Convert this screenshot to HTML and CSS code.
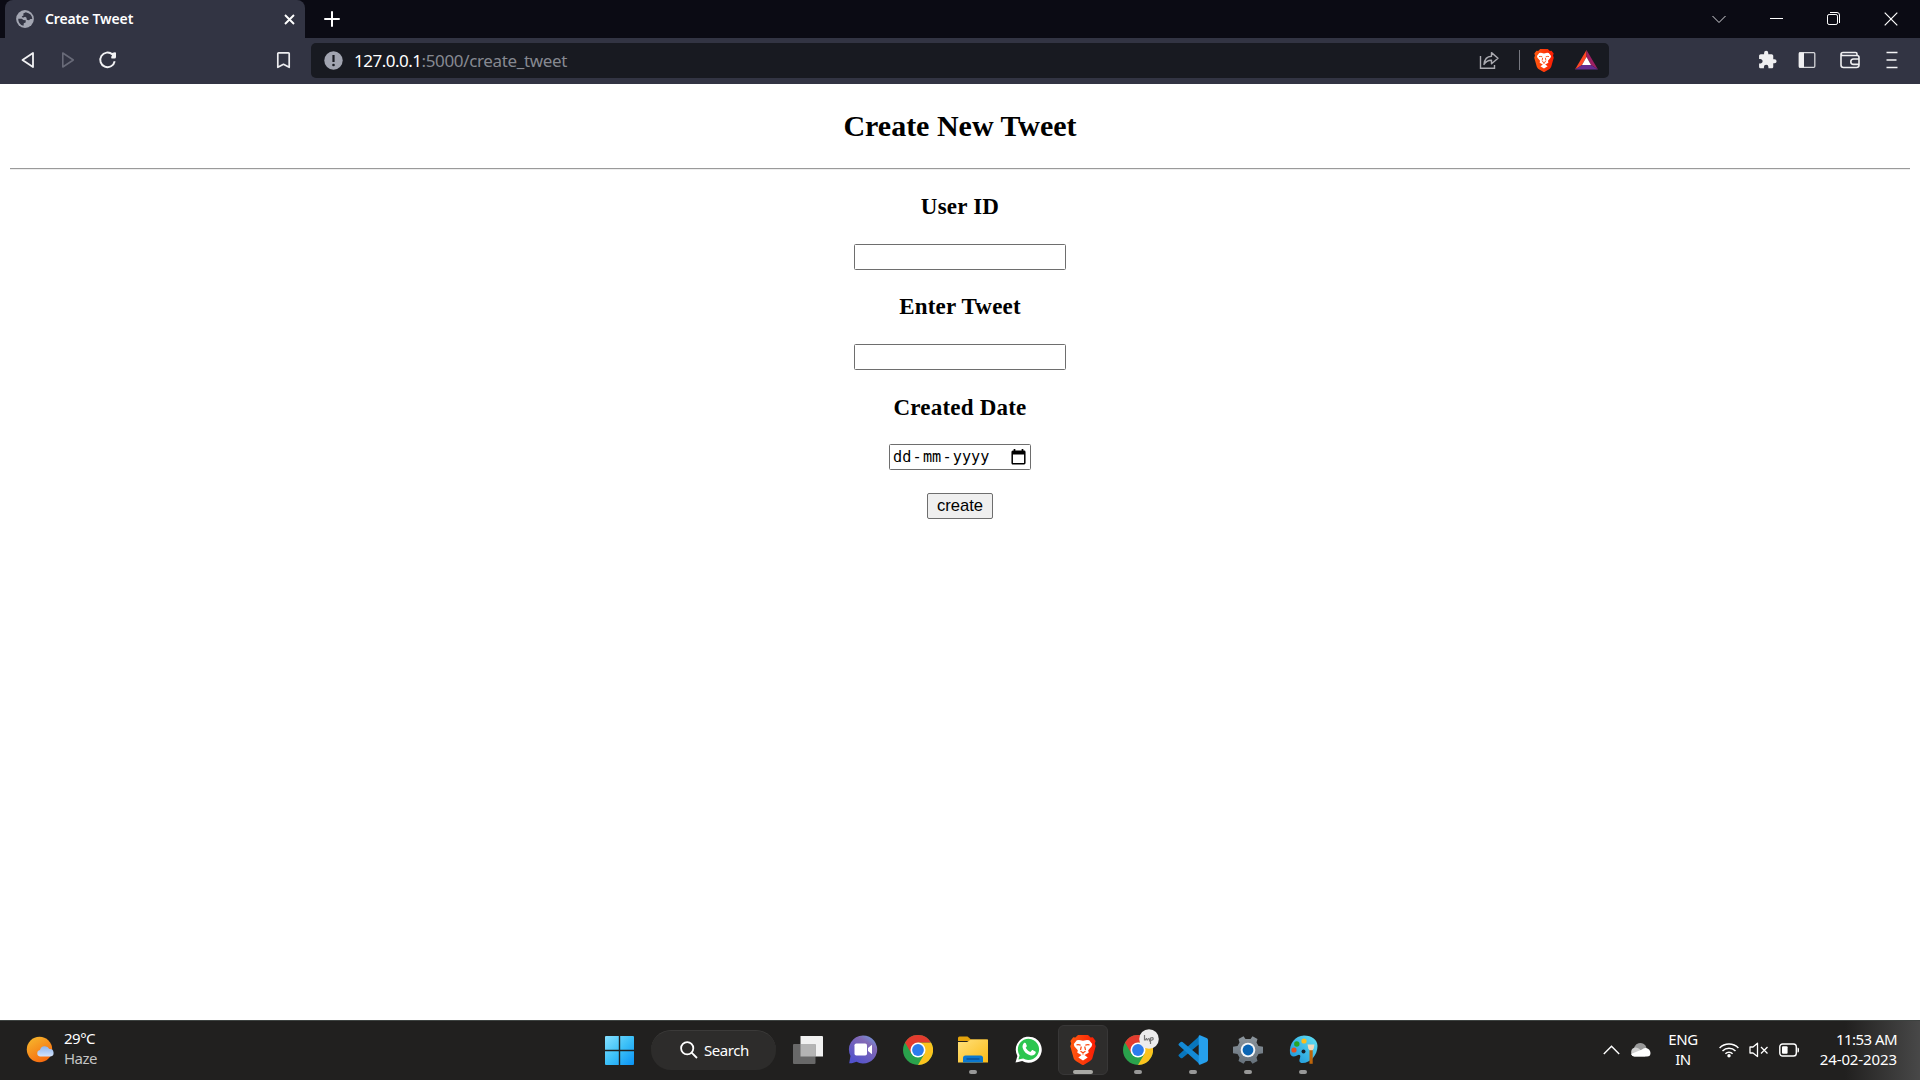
FILE: index.html
```html
<!DOCTYPE html>
<html lang="en">
<head>
<meta charset="utf-8">
<title>Create Tweet</title>
<link rel="stylesheet" href="styles.css">
</head>
<body>
<svg class="defs" width="0" height="0" aria-hidden="true">
  <defs>
    <linearGradient id="win" x1="0" y1="0" x2="1" y2="1"><stop offset="0" stop-color="#86e0ff"/><stop offset=".5" stop-color="#3cc0f8"/><stop offset="1" stop-color="#0a93f5"/></linearGradient>
    <linearGradient id="sun" x1="0.2" y1="0" x2="0.8" y2="1"><stop offset="0" stop-color="#f6b52c"/><stop offset="1" stop-color="#f7640c"/></linearGradient>
    <linearGradient id="cloud" x1="0" y1="0" x2="0" y2="1"><stop offset="0" stop-color="#8eb5ee"/><stop offset="1" stop-color="#d3e2fb"/></linearGradient>
    <linearGradient id="chat" x1="1" y1="0" x2="0.3" y2="1"><stop offset="0" stop-color="#6ca4e8"/><stop offset=".35" stop-color="#8269b5"/><stop offset="1" stop-color="#5252cc"/></linearGradient>
    <linearGradient id="folder" x1="0" y1="0" x2="1" y2="1"><stop offset="0" stop-color="#ffe07a"/><stop offset="1" stop-color="#fbbb17"/></linearGradient>
    <linearGradient id="brave" x1="0" y1="0" x2="1" y2="0"><stop offset="0" stop-color="#ff5a10"/><stop offset="1" stop-color="#fb1c04"/></linearGradient>
    <linearGradient id="gear" x1="0" y1="0" x2="0" y2="1"><stop offset="0" stop-color="#8c959c"/><stop offset="1" stop-color="#66717b"/></linearGradient>
    <linearGradient id="paint" x1="1" y1="0" x2="0" y2="1"><stop offset="0" stop-color="#62e3f5"/><stop offset="1" stop-color="#188fd8"/></linearGradient>
    <symbol id="chrome" viewBox="0 0 30 30">
      <circle cx="15" cy="15" r="15" fill="#2aa24c"/>
      <path d="M15 7.5h13A15 15 0 0 1 15 30l6.500-11.200z" fill="#fcc31e"/>
      <path d="M2 7.500A15 15 0 0 1 28 7.500H15L8.500 18.800z" fill="#e33b2e"/>
      <circle cx="15" cy="15" r="7.500" fill="#fff"/><circle cx="15" cy="15" r="5.900" fill="#2d7cec"/>
    </symbol>
    <symbol id="lion" viewBox="0 0 26 30">
      <path d="M8 0h10l2.600 2.600 2.200-.3L25.600 6l-.8 2.500.9 2.800-3.200 11.500c-.5 1.700-1.500 2.600-2.800 3.500L14 29.700q-1 .5-2 0l-5.700-3.400c-1.300-.9-2.300-1.800-2.800-3.500L.3 11.300l.9-2.800L.4 6l2.800-3.700 2.200.3z" fill="url(#brave)"/>
      <path d="M9 5l4 .8L17 5l2.200.3 3 3.700-.5 2.200-3.500 4 .5 2.600-4.200 2.300 3.200 2.400L13 25.400l-4.700-2.900 3.200-2.400-4.200-2.300.5-2.600-3.500-4L3.800 9l3-3.700z" fill="#fff"/>
      <path d="M6.500 9.800q2.500-.4 4.200.4M19.500 9.800q-2.500-.4-4.200.4M11.300 11.500l-.8 3.500M14.700 11.500l.8 3.500M10.500 16.200l2.500 1.500 2.500-1.500M13 17.700v1.800" fill="none" stroke="#fb4a10" stroke-width="1.200"/>
    </symbol>
  </defs>
</svg>

<header class="browser">
  <div class="tabstrip">
    <div class="tab">
      <svg width="18" height="18" viewBox="0 0 18 18"><circle cx="9" cy="9" r="8.900" fill="#a3a6b2"/><path d="M2.200 8.700h3.600l1.500 1.300 2.500.3-.2 2.200-1.800.7-.3 2.600q-5.300-1.300-5.300-7.100z" fill="#323443"/><path d="M9.800 2.200 7.300 3.500l.2 2-1.800 1 1.200 1.200 2.200-.9 1.400 1 .3 1.900 2.200.6 1.300-1.400 2 .1q-.3-5.500-6.500-6.800z" fill="#323443"/></svg>
      <span class="tab-title">Create Tweet</span>
      <svg class="tab-close" width="11" height="11" viewBox="0 0 11 11"><path d="M1 1l9 9M10 1l-9 9" stroke="#fff" stroke-width="1.900"/></svg>
    </div>
    <svg class="new-tab" width="16" height="16" viewBox="0 0 16 16"><path d="M8 1v14M1 8h14" stroke="#fff" stroke-width="2" stroke-linecap="round"/></svg>
    <div class="window-controls">
      <svg width="14" height="14" viewBox="0 0 14 14"><path d="M.5 4 7 10.500 13.500 4" fill="none" stroke="#d7d7da"/></svg>
      <svg width="14" height="14" viewBox="0 0 14 14"><path d="M0 6.500h13" stroke="#fff"/></svg>
      <svg width="14" height="14" viewBox="0 0 14 14" fill="none" stroke="#fff"><rect x=".5" y="2.500" width="10" height="10" rx="1.600"/><path d="M3 .5h7a2.500 2.500 0 0 1 2.500 2.500v8"/></svg>
      <svg width="14" height="14" viewBox="0 0 14 14"><path d="M.7.7l12.600 12.600M13.300.7.7 13.300" stroke="#fff" stroke-width="1.200"/></svg>
    </div>
  </div>

  <div class="toolbar">
    <div class="nav">
      <svg width="32" height="32" viewBox="0 0 32 32"><path d="M21 9v14L10.500 16z" fill="none" stroke="#f2f2f4" stroke-width="1.800" stroke-linejoin="round"/></svg>
      <svg width="32" height="32" viewBox="0 0 32 32"><path d="M10.800 9v14L21.300 16z" fill="none" stroke="#686a78" stroke-width="1.600" stroke-linejoin="round"/></svg>
      <svg width="32" height="32" viewBox="0 0 32 32"><path d="M22.700 17.300A7.300 7.300 0 1 1 20.500 10.500" fill="none" stroke="#f2f2f4" stroke-width="1.900"/><path d="M20 9q4-1.500 4 0v4q0 1.500-1.500 1.500h-3q-1-1.500.5-3z" fill="#f2f2f4"/></svg>
      <svg class="bookmark" width="32" height="32" viewBox="0 0 32 32"><path d="M10.800 9.600q0-.8.800-.8h9.800q.8 0 .8.800V23.300L16.500 20.300l-5.700 3z" fill="none" stroke="#ededf0" stroke-width="1.700" stroke-linejoin="round"/></svg>
    </div>
    <div class="address">
      <svg width="19" height="19" viewBox="0 0 19 19"><circle cx="9.500" cy="9.500" r="9.200" fill="#a1a4b0"/><path d="M9.500 4v7" stroke="#181a21" stroke-width="2.200"/><circle cx="9.500" cy="14" r="1.300" fill="#181a21"/></svg>
      <span class="url"><span class="host">127.0.0.1</span>:5000/create_tweet</span>
      <div class="address-actions">
        <svg width="20" height="20" viewBox="0 0 20 20" fill="none" stroke="#aaaab0" stroke-width="1.400"><path d="M1.500 6v12.300h14V15"/><path d="M5 14.500C5.500 9 8 6.500 12.500 6.300V2.600L19 8.300l-6.500 5.500v-3.600c-3.500-.1-5.500.8-7.500 4.300z" stroke-linejoin="round"/></svg>
        <i class="divider"></i>
        <svg width="20" height="23"><use href="#lion" width="20" height="23"/></svg>
        <svg width="23" height="20" viewBox="0 0 23 20"><path d="M11.500 0 0 19.500 7 15l4.500-8z" fill="#ff4724"/><path d="M11.500 0 23 19.500 16 15l-4.500-8z" fill="#9e1f63"/><path d="M0 19.500h23L16 15H7z" fill="#662d91"/><path d="M11.500 7 16 15H7z" fill="#fff"/></svg>
      </div>
    </div>
    <div class="extensions">
      <svg width="20" height="20" viewBox="0 0 24 24"><path d="M21 11h-1.500V7c0-1.100-.9-2-2-2h-4V3.500a2.500 2.500 0 0 0-5 0V5h-4c-1.100 0-2 .9-2 2v3.800H4c1.500 0 2.700 1.200 2.700 2.700S5.500 16.200 4 16.200H2.500V20c0 1.100.9 2 2 2h3.800v-1.500a2.700 2.700 0 0 1 5.400 0V22h3.800c1.100 0 2-.9 2-2v-4H21a2.500 2.500 0 0 0 0-5z" fill="#efeff1"/></svg>
      <svg width="18" height="18" viewBox="0 0 18 18"><rect x="1.200" y="1.700" width="15.600" height="14.600" rx="1" fill="none" stroke="#d5d6da" stroke-width="1.300"/><path d="M1 1.500h5v15H1z" fill="#efeff1"/></svg>
      <svg width="20" height="18" viewBox="0 0 20 18" fill="none" stroke="#efeff1" stroke-width="1.600"><path d="M17 4.500V3q0-1.500-1.500-1.500H3Q1 1.500 1 3.500V14q0 2.500 2.500 2.500h13Q19 16.500 19 14V6.500q0-2-2-2H3Q1 4.500 1 3"/><path d="M19 8h-5.500a2.700 2.700 0 0 0 0 5.400H19"/></svg>
      <svg width="12" height="18" viewBox="0 0 12 18"><path d="M.5 1.500h11M.5 9h10M.5 16.500h11" stroke="#f4f4f6" stroke-width="1.600"/></svg>
    </div>
  </div>
</header>

<main class="page">
  <h2>Create New Tweet</h2>
  <hr>
  <form class="tweet-form">
    <h3>User ID</h3>
    <input class="field" type="text" aria-label="User ID">
    <h3>Enter Tweet</h3>
    <input class="field" type="text" aria-label="Enter Tweet">
    <h3 class="created">Created Date</h3>
    <div class="date-field">
      <span>dd</span><span class="dash">-</span><span>mm</span><span class="dash">-</span><span>yyyy</span>
      <svg width="15" height="16" viewBox="0 0 15 16"><path d="M3.500 0v3M11.500 0v3" stroke="#000" stroke-width="1.700"/><rect x="1.200" y="2.300" width="12.600" height="12.500" rx=".7" fill="none" stroke="#000" stroke-width="1.500"/><path d="M1 2h13v3.500H1z"/></svg>
    </div>
    <button class="create" type="button">create</button>
  </form>
</main>

<footer class="taskbar">
  <div class="weather">
    <svg width="29" height="27" viewBox="0 0 29 27"><circle cx="13.500" cy="13.500" r="12.700" fill="url(#sun)"/><path d="M14 20.500a3.300 3.300 0 0 1 0-6.500 5 5 0 0 1 9.300-1 3.800 3.800 0 0 1 1.200 7.500z" fill="url(#cloud)"/></svg>
    <div class="weather-text"><span>29°C</span><span class="muted">Haze</span></div>
  </div>

  <div class="apps">
    <svg class="start" width="29" height="29" viewBox="0 0 29 29"><path d="M0 1q0-1 1-1h12.800v13.800H0zM15.200 0H28q1 0 1 1v12.800H15.200zM0 15.200h13.800V29H1q-1 0-1-1zM15.200 15.200H29V28q0 1-1 1H15.200z" fill="url(#win)"/></svg>
    <div class="search">
      <svg width="18" height="18" viewBox="0 0 18 18" fill="none" stroke="#fff" stroke-width="1.800"><circle cx="7.200" cy="7.200" r="6.100"/><path d="M11.600 11.600 17 17"/></svg>
      <span>Search</span>
    </div>
    <div class="app"><svg width="30" height="28" viewBox="0 0 30 28"><path d="M7.500 0H29q1 0 1 1v19.500H7.500z" fill="#f1f1f1"/><rect y="8" width="22.500" height="20" rx="1" fill="#686868"/><path d="M7.500 8h15v12.500h-15z" fill="#b4b4b4"/></svg></div>
    <div class="app"><svg width="30" height="29" viewBox="0 0 30 29"><path d="M15 .5a14 14 0 1 1-6.500 26.300c-2 1-5 1.700-7.300 1.500L2.500 21A14 14 0 0 1 15 .5z" fill="url(#chat)"/><rect x="6.500" y="8.500" width="12.500" height="12" rx="1.800" fill="#fff"/><path d="M20 13l4-3.200v9.500L20 16z" fill="#fff"/></svg></div>
    <div class="app"><svg width="30" height="30"><use href="#chrome" width="30" height="30"/></svg></div>
    <div class="app open"><svg width="30" height="27" viewBox="0 0 30 27"><path d="M0 2Q0 .5 1.500.5h8L13 3.500h15.500q1.500 0 1.500 1.500H0z" fill="#e4a30c"/><path d="M0 6h9l4-2.500h17V26.500H0z" fill="url(#folder)"/><path d="M5 26.500V22q0-2.500 2.500-2.500h15Q25 19.500 25 22v4.500z" fill="#0b78d0"/><path d="M8.500 23h13" stroke="#07478c" stroke-width="1.200"/></svg></div>
    <div class="app"><svg width="27" height="27" viewBox="0 0 27 27"><path d="M.5 26.500 2.400 20A13 13 0 1 1 7.200 24.900z" fill="#fff"/><path d="M3.400 23.600l1.200-4.400a10.600 10.600 0 1 1 3.600 3.400z" fill="#2cc64f"/><path d="M9 7c.7-.6 1.500-.4 1.800.3l1 2.400c.2.6-.6 1.500-1.100 2.100 1 2 2.500 3.300 4.700 4.200l1.300-1.600c.4-.5.8-.4 1.300-.2l2.300 1.200c.6.3.6.8.3 1.700-.6 1.900-2.900 2.900-4.900 2.300C11.500 18.300 8.800 15.700 7.700 12c-.5-2 .1-4 1.300-5z" fill="#fff"/></svg></div>
    <div class="app open active"><svg width="26" height="30"><use href="#lion" width="26" height="30"/></svg></div>
    <div class="app open"><svg width="30" height="30"><use href="#chrome" width="30" height="30"/></svg>
      <svg class="profile" width="20" height="20" viewBox="0 0 20 20"><circle cx="10" cy="10" r="9.800" fill="#ececec"/><path d="M5.500 6v5q2 0 2-2M8 11.500q1.500-3 2.500-1v2M11.500 15V9q3.500-1 2.500 1.500l-2 1" fill="none" stroke="#777" stroke-width="1.200"/></svg></div>
    <div class="app open"><svg width="30" height="30" viewBox="0 0 30 30"><path d="M1 19.500 22 .5v8L4.500 23q-1 .7-1.800 0L.8 21.200q-.8-.9.200-1.700z" fill="#0876bd"/><path d="M1 10.500 22 29.500v-8L4.500 7q-1-.7-1.800 0L.8 8.800q-.8.900.2 1.700z" fill="#1389d5"/><path d="M22 .3 28.600 3.100Q30 3.800 30 5v20q0 1.200-1.400 1.900L22 29.700q-1.300.2-1.300-1.200V1.500Q20.700.1 22 .3z" fill="#26a0ed"/></svg></div>
    <div class="app open"><svg width="30" height="28" viewBox="0 0 30 28"><path d="M10.500.2 12.500 3h5l2-2.800 5 2.800-1 3.600 2 3.400 4.500.8v6.400l-4.500.8-2 3.400 1 3.600-5 2.800-2-2.800h-5l-2 2.800-5-2.800 1-3.600-2-3.400-4.500-.8v-6.400l4.500-.8 2-3.400-1-3.600z" fill="url(#gear)"/><circle cx="15" cy="14" r="7.300" fill="#f4f6f8"/><circle cx="15" cy="14" r="5.400" fill="#0a65b4"/></svg></div>
    <div class="app open"><svg width="29" height="29" viewBox="0 0 29 29"><path d="M15 .5C23 .5 28.500 5 28.500 11c0 9-7 17-15 17-3.500 0-3.500-2.500-2.500-5 1-2.800-.5-4-3-2.500-3.500 2-6.500 1-7-2.500C0 9 6 .5 15 .5z" fill="url(#paint)"/><circle cx="7.800" cy="9" r="2.700" fill="#27a526"/><circle cx="15" cy="6" r="2.600" fill="#fbbd1d"/><circle cx="5" cy="15" r="2.600" fill="#e34f24"/><circle cx="14.500" cy="16.500" r="2" fill="#17202a"/><path d="M20.500 15h3.200v13.800h-3.200z" fill="#bd650b"/><path d="M18.500 9.500h7l-.8 4-1.200 1.700h-3L19.300 13.500z" fill="#f0d9bd"/></svg></div>
  </div>

  <div class="tray">
    <svg class="up" width="17" height="10" viewBox="0 0 17 10"><path d="M.8 9 8.500 1.200 16.200 9" fill="none" stroke="#fff" stroke-width="1.400"/></svg>
    <svg class="onedrive" width="21" height="14" viewBox="0 0 21 14"><path d="M4 8a6.500 6.500 0 0 1 12.500-3.500L11 10z" fill="#999"/><path d="M4.500 13.500a4.600 4.600 0 0 1 .8-9q2.200-.2 4.200 1.500l6 7.500z" fill="#cfcfcf"/><path d="M1 11 12 6.500q1.600-2 4.200-1.500 4 1 4.300 5 0 3.500-3.500 3.500H4.500Q2 13.500 1 11z" fill="#fff"/></svg>
    <div class="lang"><span>ENG</span><span>IN</span></div>
    <svg class="wifi" width="20" height="16" viewBox="0 0 20 16" fill="none" stroke="#fff" stroke-width="1.500"><path d="M.6 6a13.200 13.200 0 0 1 18.800 0M3.500 9a9.200 9.200 0 0 1 13 0M6.400 11.800a5 5 0 0 1 7.200 0"/><circle cx="10" cy="13.800" r="1.700" fill="#fff" stroke="none"/></svg>
    <svg class="volume" width="20" height="16" viewBox="0 0 20 16" fill="none" stroke="#fff" stroke-width="1.300"><path d="M1 5h3L8.500 1.200v13.300L4 11H1z" stroke-linejoin="round"/><path d="M12 5l6.500 6.500M18.500 5 12 11.500"/></svg>
    <svg class="battery" width="21" height="14" viewBox="0 0 21 14"><rect x=".8" y="1" width="16.500" height="12" rx="2.800" fill="none" stroke="#fff" stroke-width="1.400"/><rect x="3" y="3.200" width="5.600" height="7.600" rx="1" fill="#fff"/><path d="M18.500 4.500q1.500 0 1.500 1.500v2q0 1.500-1.500 1.500z" fill="#fff"/></svg>
    <div class="clock"><span class="time">11:53 AM</span><span class="date">24-02-2023</span></div>
  </div>
</footer>
</body>
</html>
```
FILE: styles.css
```css
* { box-sizing: border-box; }

body {
  margin: 0;
  width: 1920px;
  height: 1080px;
  overflow: hidden;
  display: flex;
  flex-direction: column;
  background: #fff;
  font-family: "Liberation Serif", serif;
}

svg { display: block; flex: none; }
.defs { position: absolute; }

/* Browser chrome */
.browser, .taskbar { font-family: "Noto Sans", "Open Sans", sans-serif; }
.browser { height: 84px; background: #323443; flex: none; }

.tabstrip {
  display: flex;
  align-items: center;
  height: 38px;
  padding-left: 5px;
  background: #0b0b14;
}
.tab {
  display: flex;
  align-items: center;
  width: 300px;
  height: 38px;
  padding: 0 10px 0 11px;
  border-radius: 8px 8px 0 0;
  background: #323443;
}
.tab-title {
  margin-left: 11px;
  padding-bottom: 2px;
  color: #fff;
  font-size: 14px;
  font-weight: 600;
  letter-spacing: -0.15px;
}
.tab-close { margin-left: auto; }
.new-tab { margin-left: 19px; }
.window-controls {
  display: grid;
  grid-template-columns: repeat(4, 57.300px);
  justify-items: center;
  margin-left: auto;
}

.toolbar { display: flex; align-items: center; height: 46px; padding-bottom: 2px; }
.nav {
  display: flex;
  gap: 8px;
  width: 311px;
  padding: 0 12px;
}
.bookmark { margin-left: auto; }
.address {
  display: flex;
  align-items: center;
  width: 1298px;
  height: 35px;
  padding: 0 11px 0 13px;
  border-radius: 5px;
  background: #181a21;
}
.url {
  margin-left: 11px;
  color: #868991;
  font-size: 17px;
  letter-spacing: -0.35px;
}
.host { color: #fff; letter-spacing: -0.5px; }
.address-actions { display: flex; align-items: center; margin-left: auto; }
.divider { width: 1px; height: 20px; margin: 0 14px 0 20px; background: #777981; }
.address-actions svg:last-child { margin-left: 21px; }
.extensions {
  display: grid;
  grid-template-columns: 41px 42px 46px 12px;
  align-items: center;
  margin-left: 148px;
}

/* Page */
.page { flex: 1; padding: 0 10px; }
.page h2 {
  margin: 24px 0 25px;
  line-height: 35px;
  font-size: 30px;
  text-align: center;
}
.page hr {
  height: 2px;
  margin: 0;
  border: 0;
  border-top: 1px solid #9a9a9a;
  border-bottom: 1px solid #eee;
}
.tweet-form { display: flex; flex-direction: column; align-items: center; }
.tweet-form h3 {
  margin: 23px 0 24px;
  line-height: 27px;
  font-size: 23px;
  letter-spacing: 0.2px;
}
.tweet-form .created { margin: 24px 0 23px; }
.field {
  width: 212px;
  height: 26px;
  margin: 0;
  border: 1px solid #6e6e6e;
  border-radius: 1.500px;
  background: #fff;
}
.date-field {
  display: flex;
  align-items: center;
  width: 142px;
  height: 26px;
  padding: 0 4px 0 3px;
  border: 1px solid #6e6e6e;
  border-radius: 1.500px;
  font: 15.200px/24px "DejaVu Sans Mono", monospace;
}
.date-field .dash { width: 11.600px; text-align: center; }
.date-field svg { margin-left: auto; }
.create {
  width: 66px;
  height: 26px;
  margin-top: 23px;
  padding: 0;
  border: 1px solid #6e6e6e;
  border-radius: 2px;
  background: #efefef;
  color: #000;
  font: 16.600px/22px "Liberation Sans", sans-serif;
}

/* Taskbar */
.taskbar {
  display: flex;
  align-items: center;
  height: 60px;
  flex: none;
  padding-bottom: 2px;
  border-top: 1px solid #3d4240;
  background: linear-gradient(90deg, #21201f 0, #21201f 1845px, #484848 1920px);
  color: #fff;
  font-size: 15px;
  line-height: 20px;
}
.weather { display: flex; align-items: center; width: 605px; padding-left: 26px; }
.weather-text { display: flex; flex-direction: column; margin: 0 0 3px 9px; letter-spacing: -0.5px; }
.muted { color: #c4c4c4; }

.apps { display: flex; align-items: center; }
.start { margin-top: 1px; }
.search {
  display: flex;
  align-items: center;
  width: 125px;
  height: 40px;
  margin: 0 7px 0 17px;
  padding-left: 29px;
  border-radius: 20px;
  border-top: 1px solid #3b3a39;
  background: #2d2c2b;
}
.search span { margin-left: 6px; letter-spacing: -0.45px; }
.app {
  position: relative;
  display: flex;
  align-items: center;
  justify-content: center;
  width: 50px;
  height: 50px;
  margin-right: 5px;
}
.active { border: 1px solid #383737; border-radius: 6px; background: #2e2d2c; }
.open::after {
  content: "";
  position: absolute;
  bottom: 1px;
  left: calc(50% - 4px);
  width: 8px;
  height: 4px;
  border-radius: 2px;
  background: #989898;
}
.active::after { bottom: 0; left: calc(50% - 10px); width: 20px; background: #a9a9a5; }
.profile { position: absolute; top: 4px; left: 26px; }

.tray { display: flex; align-items: center; margin-left: auto; padding-right: 23px; }
.onedrive { margin-left: 10px; }
.lang { display: flex; flex-direction: column; align-items: center; width: 32px; margin: 0 0 1px 16px; letter-spacing: -0.4px; }
.wifi { margin-left: 20px; }
.volume { margin-left: 10px; }
.battery { margin-left: 10px; }
.clock { display: flex; flex-direction: column; align-items: flex-end; width: 83px; margin: 0 0 2px 14px; }
.time { letter-spacing: -0.55px; }
.date { letter-spacing: -0.1px; }
```
